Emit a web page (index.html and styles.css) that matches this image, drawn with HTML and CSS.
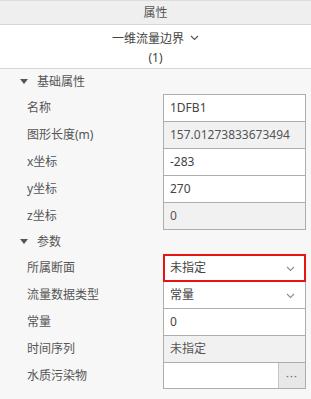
FILE: index.html
```
<!DOCTYPE html>
<html lang="zh-CN">
<head>
    <meta charset="UTF-8">
    <title>属性</title>
    <link rel="stylesheet" href="styles.css">
</head>
<body>
<div class="panel">
    <div class="panel-title">属性</div>
    <div class="type-head">
        <div class="type-name">一维流量边界
            <svg class="head-arrow" width="9" height="6" viewBox="0 0 9 6"><path d="M1 1l3.5 3.5L8 1" fill="none" stroke="#555" stroke-width="1.2"/></svg>
        </div>
        <div class="type-count">(1)</div>
    </div>

    <div class="group-title"><span class="tri"></span>基础属性</div>
    <div class="group">
        <div class="row"><span class="label">名称</span><div class="field">1DFB1</div></div>
        <div class="row"><span class="label">图形长度(m)</span><div class="field off">157.01273833673494</div></div>
        <div class="row"><span class="label">x坐标</span><div class="field">-283</div></div>
        <div class="row"><span class="label">y坐标</span><div class="field">270</div></div>
        <div class="row"><span class="label">z坐标</span><div class="field off">0</div></div>
    </div>

    <div class="group-title"><span class="tri"></span>参数</div>
    <div class="group">
        <div class="row"><span class="label">所属断面</span>
            <div class="field select error">未指定
                <svg class="sel-arrow" width="9" height="6" viewBox="0 0 9 6"><path d="M1 1l3.5 3.5L8 1" fill="none" stroke="#8a8f99" stroke-width="1.1"/></svg>
            </div>
        </div>
        <div class="row"><span class="label">流量数据类型</span>
            <div class="field select">常量
                <svg class="sel-arrow" width="9" height="6" viewBox="0 0 9 6"><path d="M1 1l3.5 3.5L8 1" fill="none" stroke="#8a8f99" stroke-width="1.1"/></svg>
            </div>
        </div>
        <div class="row"><span class="label">常量</span><div class="field">0</div></div>
        <div class="row"><span class="label">时间序列</span><div class="field off">未指定</div></div>
        <div class="row last"><span class="label">水质污染物</span>
            <div class="field pick"><span class="pick-text"></span><span class="pick-btn">···</span></div>
        </div>
    </div>
</div>
</body>
</html>
```

FILE: styles.css
```
body{
    margin: 0;
    background: #f7f7f7;
    font-family: "Noto Sans", "Noto Sans CJK SC", sans-serif;
    font-size: 12px;
    color: #444;
}
.panel{
    width: 311px;
}
.panel-title{
    height: 25px;
    line-height: 23px;
    text-align: center;
    background: #efefef;
    border-top: 1px solid #dcdcdc;
    border-bottom: 1px solid #d6d6d6;
    box-sizing: border-box;
    color: #555;
}
.type-head{
    background: #fff;
    text-align: center;
    padding: 4px 0 5px;
    border-bottom: 1px solid #d6d6d6;
    height: 44px;
    box-sizing: border-box;
}
.type-name,
.type-count{
    line-height: 19px;
}
.head-arrow{
    margin-left: 3px;
    vertical-align: 2px;
}
.group-title{
    height: 25px;
    line-height: 25px;
    padding-left: 20px;
    display: flex;
    align-items: center;
    color: #555;
}
.tri{
    width: 0;
    height: 0;
    border-left: 4px solid transparent;
    border-right: 4px solid transparent;
    border-top: 5px solid #555;
    margin-right: 9px;
}
.group{
    display: flex;
    flex-direction: column;
}
.row{
    display: flex;
    height: 27px;
}
.row.last .field{
    height: 27px;
}
.label{
    width: 163px;
    padding-left: 27px;
    box-sizing: border-box;
    line-height: 27px;
    color: #555;
}
.field{
    position: relative;
    width: 143px;
    height: 28px;
    box-sizing: border-box;
    border: 1px solid #adadad;
    background: #fff;
    padding-left: 6px;
    line-height: 26px;
    color: #444;
}
.field.off{
    background: #f1f1f1;
    color: #555;
}
.field.error{
    border-color: #e81414;
    box-shadow: inset 0 0 0 1px #e81414;
    z-index: 1;
}
.sel-arrow{
    position: absolute;
    right: 10px;
    top: 11px;
}
.field.pick{
    display: flex;
    padding-left: 0;
}
.pick-text{
    flex: 1;
}
.pick-btn{
    width: 26px;
    background: #e8e8e8;
    border-left: 1px solid #c4c4c4;
    text-align: center;
    color: #666;
    font-size: 11px;
    letter-spacing: 1px;
}
```
